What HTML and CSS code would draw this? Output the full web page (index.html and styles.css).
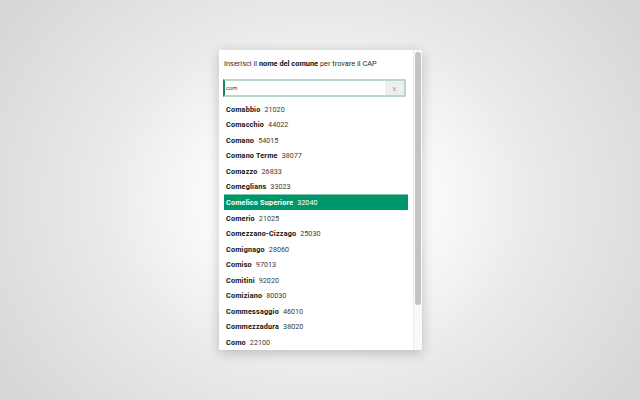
FILE: index.html
```html
<!DOCTYPE html>
<html lang="it">
<head>
<meta charset="utf-8">
<title>CAP</title>
<link rel="stylesheet" href="styles.css">
</head>
<body>
<div class="panel">
  <div class="content">
    <p class="intro">Inserisci il <b>nome del comune</b> per trovare il CAP</p>
    <div class="search">
      <input class="field" type="text" value="com">
      <span class="clear">X</span>
    </div>
    <ul class="list">
      <li class="row"><b>Comabbio</b><span class="cap">21020</span></li>
      <li class="row"><b>Comacchio</b><span class="cap">44022</span></li>
      <li class="row"><b>Comano</b><span class="cap">54015</span></li>
      <li class="row"><b>Comano Terme</b><span class="cap">38077</span></li>
      <li class="row"><b>Comazzo</b><span class="cap">26833</span></li>
      <li class="row"><b>Comeglians</b><span class="cap">33023</span></li>
      <li class="row active"><b>Comelico Superiore</b><span class="cap">32040</span></li>
      <li class="row"><b>Comerio</b><span class="cap">21025</span></li>
      <li class="row"><b>Comezzano-Cizzago</b><span class="cap">25030</span></li>
      <li class="row"><b>Comignago</b><span class="cap">28060</span></li>
      <li class="row"><b>Comiso</b><span class="cap">97013</span></li>
      <li class="row"><b>Comitini</b><span class="cap">92020</span></li>
      <li class="row"><b>Comiziano</b><span class="cap">80030</span></li>
      <li class="row"><b>Commessaggio</b><span class="cap">46010</span></li>
      <li class="row"><b>Commezzadura</b><span class="cap">38020</span></li>
      <li class="row"><b>Como</b><span class="cap">22100</span></li>
    </ul>
  </div>
  <div class="scrollbar"><div class="thumb"></div></div>
</div>
</body>
</html>
```

FILE: styles.css
```css
html, body {
  margin: 0;
  height: 100%;
}
body {
  display: flex;
  align-items: center;
  justify-content: center;
  background: radial-gradient(ellipse 58% 78% at 50% 50%, #ffffff 0%, #ffffff 22%, #eaeaea 58%, #d8d8d8 100%);
  font-family: Roboto, "Liberation Sans", Arial, sans-serif;
  color: #1c1c1c;
}
.panel {
  display: flex;
  width: 203px;
  height: 300px;
  margin-left: 1px;
  background: #fff;
  box-shadow: 0 3px 12px rgba(0, 0, 0, 0.22);
  overflow: hidden;
}
.content {
  flex: 1;
  min-width: 0;
  overflow: hidden;
}
.scrollbar {
  width: 6px;
  padding: 2px 1px 0 1px;
  background: #f8f8f8;
  border-left: 1px solid #ececec;
}
.thumb {
  height: 253px;
  background: #c4c4c4;
  border-radius: 3px;
}
.intro {
  margin: 0;
  padding: 9px 0 0 5px;
  font-size: 7.4px;
  line-height: 10px;
  color: #2a2a2a;
  white-space: nowrap;
}
.intro b {
  font-weight: 700;
  color: #111;
}
.search {
  display: flex;
  margin: 10px 7px 0 4px;
  height: 18px;
  box-sizing: border-box;
  border: 2px solid #b7d8c8;
  border-left-color: #15895a;
}
.field {
  flex: 1;
  min-width: 0;
  border: 0;
  outline: 0;
  padding: 0 0 0 1px;
  margin: 0;
  font-family: Roboto, "Liberation Sans", Arial, sans-serif;
  font-size: 5.8px;
  color: #333;
  background: #fff;
}
.clear {
  width: 19px;
  display: flex;
  align-items: center;
  justify-content: center;
  background: #eeeeee;
  color: #9a9a9a;
  font-size: 6px;
}
.list {
  list-style: none;
  margin: 4px 5px 0 5px;
  padding: 0;
}
.row {
  box-sizing: border-box;
  height: 15.5px;
  padding: 1.5px 0 0 2px;
  line-height: 14px;
  font-size: 7.2px;
  white-space: nowrap;
}
.row b {
  font-weight: 700;
  letter-spacing: 0.2px;
  color: #111;
}
.cap {
  margin-left: 4px;
  color: #3a3a3a;
}
.row.active {
  background: #00966b;
  border-top: 1px solid #7cc4ab;
  height: 16px;
  padding-top: 0.5px;
}
.row.active b,
.row.active .cap {
  color: #fff;
}
```
